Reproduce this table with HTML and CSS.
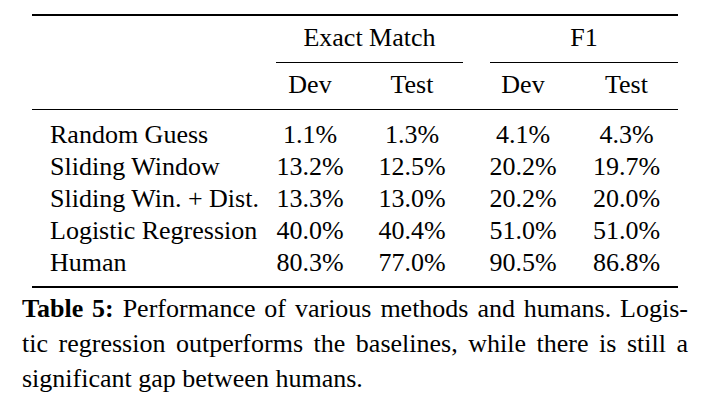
FILE: index.html
```html
<!DOCTYPE html>
<html>
<head>
<meta charset="utf-8">
<link rel="stylesheet" href="styles.css">
</head>
<body>
<div class="page">
  <div class="tbl">
    <div class="rule thick"></div>
    <div class="row head1">
      <div class="grp em">Exact Match</div>
      <div class="grp f1">F1</div>
    </div>
    <div class="row head2">
      <div class="lbl"></div>
      <div class="num">Dev</div>
      <div class="num">Test</div>
      <div class="num c4">Dev</div>
      <div class="num">Test</div>
    </div>
    <div class="rule thin"></div>
    <div class="body">
      <div class="row">
        <div class="lbl">Random Guess</div>
        <div class="num">1.1%</div>
        <div class="num">1.3%</div>
        <div class="num c4">4.1%</div>
        <div class="num">4.3%</div>
      </div>
      <div class="row">
        <div class="lbl">Sliding Window</div>
        <div class="num">13.2%</div>
        <div class="num">12.5%</div>
        <div class="num c4">20.2%</div>
        <div class="num">19.7%</div>
      </div>
      <div class="row">
        <div class="lbl">Sliding Win. + Dist.</div>
        <div class="num">13.3%</div>
        <div class="num">13.0%</div>
        <div class="num c4">20.2%</div>
        <div class="num">20.0%</div>
      </div>
      <div class="row">
        <div class="lbl">Logistic Regression</div>
        <div class="num">40.0%</div>
        <div class="num">40.4%</div>
        <div class="num c4">51.0%</div>
        <div class="num">51.0%</div>
      </div>
      <div class="row">
        <div class="lbl">Human</div>
        <div class="num">80.3%</div>
        <div class="num">77.0%</div>
        <div class="num c4">90.5%</div>
        <div class="num">86.8%</div>
      </div>
    </div>
    <div class="rule thick"></div>
  </div>
  <div class="caption">
    <span class="line just"><b>Table 5:</b> Performance of various methods and humans. Logis-</span>
    <span class="line just">tic regression outperforms the baselines, while there is still a</span>
    <span class="line">significant gap between humans.</span>
  </div>
</div>
</body>
</html>
```

FILE: styles.css
```css
html, body {
  margin: 0;
  background: #fff;
}

body {
  font-family: "Liberation Serif", "Times New Roman", serif;
  color: #000;
}

.page {
  width: 666px;
  padding: 14px 22px 0;
}

.tbl {
  margin: 0 10px;
  width: 646px;
}

.rule {
  background: #000;
}

.rule.thick {
  height: 2px;
}

.rule.thin {
  height: 1px;
}

.row {
  display: grid;
  grid-template-columns: 227px 102px 102px 112px 103px;
  font-size: 26px;
  line-height: 32px;
}

.head1 {
  padding-top: 7px;
  line-height: 30px;
}

.grp {
  text-align: center;
  padding-bottom: 9px;
  border-bottom: 1px solid #000;
}

.grp.em {
  grid-column: 2 / 4;
  margin-left: 17px;
}

.grp.f1 {
  grid-column: 4 / 6;
  margin-left: 27px;
}

.head2 {
  padding: 7px 0 9px;
  line-height: 30px;
}

.body {
  padding: 9px 0 7px;
}

.lbl {
  padding-left: 18px;
  white-space: nowrap;
}

.num {
  text-align: center;
  white-space: nowrap;
}

.num.c4 {
  padding-left: 8px;
}

.caption {
  margin-top: 3px;
  font-size: 26px;
  line-height: 35px;
}

.caption .line {
  display: block;
  white-space: nowrap;
}

.caption .line.just {
  text-align: justify;
  text-align-last: justify;
  white-space: normal;
}

.caption b {
  font-weight: bold;
}
```
